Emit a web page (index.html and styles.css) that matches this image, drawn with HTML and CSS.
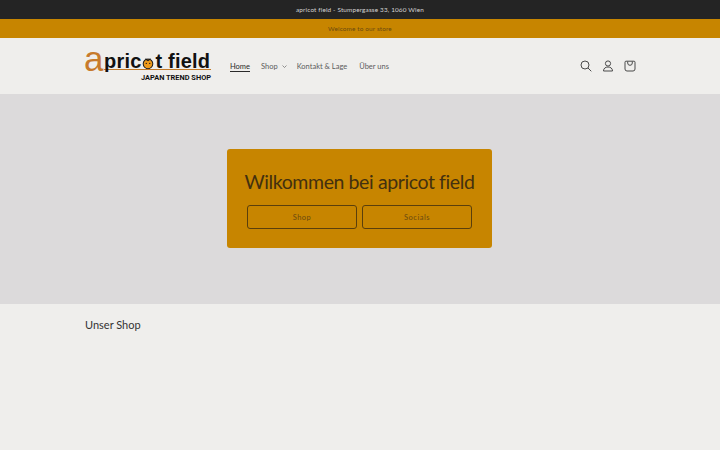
FILE: index.html
```html
<!DOCTYPE html>
<html lang="de">
<head>
<meta charset="utf-8">
<title>apricot field</title>
<link rel="stylesheet" href="styles.css">
</head>
<body>
<div class="bar-dark">apricot field - Stumpergasse 33, 1060 Wien</div>
<div class="bar-amber">Welcome to our store</div>
<header class="header">
  <a class="logo" href="#">
    <span class="logo-top">
      <span class="logo-a">a</span><span class="logo-word">pric<svg class="logo-o" viewBox="0 0 14 14" width="12" height="12"><circle cx="7" cy="8" r="5.6" fill="#ef9a1a" stroke="#1a1a1a" stroke-width="1.2"/><path d="M4 2.2 7 4l3-2" fill="none" stroke="#1a1a1a" stroke-width="1.4"/><circle cx="5" cy="7.5" r=".8" fill="#222"/><circle cx="9" cy="7.5" r=".8" fill="#222"/></svg>t field</span>
    </span>
    <span class="logo-sub">JAPAN TREND SHOP</span>
  </a>
  <nav class="nav">
    <a class="nav-link active" href="#">Home</a>
    <a class="nav-link shop-link" href="#">Shop<svg class="chev" viewBox="0 0 10 6" width="5" height="3"><path d="M1 1l4 4 4-4" fill="none" stroke="currentColor" stroke-width="1.3"/></svg></a>
    <a class="nav-link" href="#">Kontakt &amp; Lage</a>
    <a class="nav-link" href="#">Über uns</a>
  </nav>
  <div class="icons">
    <svg viewBox="0 0 20 20" width="20" height="20" fill="none" stroke="#4a4a4a" stroke-width="1"><circle cx="9" cy="9" r="4"/><path d="m12 12 3.300 3.300"/></svg>
    <svg viewBox="0 0 20 20" width="20" height="20" fill="none" stroke="#4a4a4a" stroke-width="1"><circle cx="10" cy="7.500" r="2.600"/><path d="M5.500 15c0-2.700 2-4 4.500-4s4.500 1.300 4.500 4z"/></svg>
    <svg viewBox="0 0 20 20" width="20" height="20" fill="none" stroke="#4a4a4a" stroke-width="1"><path d="M6 5.200h8a1 1 0 0 1 1 1v6.800a2 2 0 0 1-2 2H7a2 2 0 0 1-2-2V6.200a1 1 0 0 1 1-1z"/><path d="M7.700 5.500v1.500a2.300 2.300 0 0 0 4.600 0V5.500"/></svg>
  </div>
</header>
<section class="hero">
  <div class="card">
    <h1 class="card-title">Wilkommen bei apricot field</h1>
    <div class="card-buttons">
      <a class="btn" href="#">Shop</a>
      <a class="btn" href="#">Socials</a>
    </div>
  </div>
</section>
<section class="shop">
  <h2 class="shop-title">Unser Shop</h2>
</section>
</body>
</html>
```
FILE: styles.css
```css
* { box-sizing: border-box; }
html, body { margin: 0; height: 100%; }
body {
  background: #efeeec;
  font-family: "Lato", "Open Sans", sans-serif;
  color: #2a2a2a;
  overflow: hidden;
}
a { color: inherit; text-decoration: none; }
.bar-dark {
  height: 19px;
  background: #242424;
  color: #d4d4d4;
  font-size: 6.400px;
  letter-spacing: .15px;
  display: flex;
  align-items: center;
  justify-content: center;
}
.bar-amber {
  height: 19px;
  background: #c78500;
  color: #6b4a10;
  font-size: 6.400px;
  letter-spacing: .15px;
  display: flex;
  align-items: center;
  justify-content: center;
}
.header {
  height: 56px;
  padding: 0 80px 0 85px;
  display: flex;
  align-items: center;
}
.logo {
  width: 126px;
  display: flex;
  flex-direction: column;
  color: #111;
}
.logo-top {
  display: flex;
  align-items: flex-end;
  height: 20px;
  white-space: nowrap;
}
.logo-a {
  font-family: "Liberation Sans", sans-serif;
  font-size: 35px;
  color: #c77a2b;
  line-height: 20px;
  height: 20px;
  width: 20px;
  flex: none;
  margin: 0 0 1px -1px;
}
.logo-word {
  font-family: "Liberation Sans", sans-serif;
  font-weight: 700;
  font-size: 20px;
  line-height: 20px;
  letter-spacing: .2px;
  height: 19px;
  flex: 1;
  border-bottom: 1.500px solid #c27a28;
}
.logo-o { vertical-align: -1px; margin: 0 1px; }
.logo-sub {
  font-family: "Roboto", sans-serif;
  font-weight: 700;
  font-size: 7.400px;
  align-self: flex-end;
  margin-top: 3px;
  line-height: 9px;
}
.nav {
  display: flex;
  gap: 12px;
  margin-left: 19px;
  font-size: 7.500px;
  color: #5c5c5c;
}
.nav-link { display: flex; align-items: center; }
.nav-link.active {
  color: #2a2a2a;
  text-decoration: underline;
  text-underline-offset: 2px;
}
.shop-link { margin-left: -1px; }
.chev { margin: 1px -2px 0 4px; }
.icons {
  margin-left: auto;
  display: flex;
  gap: 2px;
}
.hero {
  height: 210px;
  background: #dcdadb;
  display: flex;
  align-items: center;
  justify-content: center;
}
.card {
  width: 265px;
  height: 99px;
  margin: -1px 1px 0 0;
  background: #c78500;
  border-radius: 3px;
  display: flex;
  flex-direction: column;
  align-items: center;
  padding-top: 19px;
}
.card-title {
  margin: 0;
  font-weight: 400;
  font-size: 19.500px;
  letter-spacing: -.4px;
  line-height: 27px;
  color: #43300f;
  white-space: nowrap;
}
.card-buttons {
  display: flex;
  gap: 5px;
  margin-top: 10px;
}
.btn {
  width: 110px;
  height: 24px;
  border: 1px solid #5a3f0c;
  border-radius: 3px;
  display: flex;
  align-items: center;
  justify-content: center;
  font-size: 7.500px;
  letter-spacing: .5px;
  color: #6b4a10;
}
.shop { padding: 13px 85px 0; }
.shop-title {
  margin: 0;
  font-weight: 400;
  font-size: 11px;
  line-height: 16px;
  color: #333;
}
```
